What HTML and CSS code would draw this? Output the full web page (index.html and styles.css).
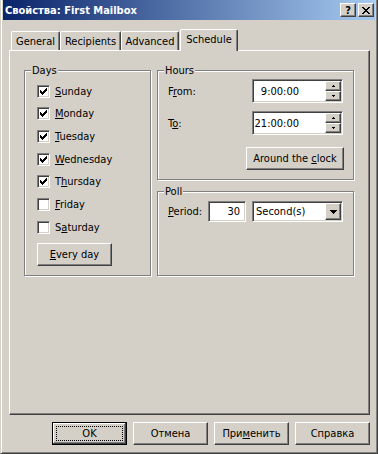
FILE: index.html
```html
<!DOCTYPE html>
<html lang="ru">
<head>
  <meta charset="UTF-8" />
  <title>Свойства: First Mailbox</title>
  <link rel="stylesheet" href="styles.css">
</head>
<body>
  <div class="window">
    <div class="titlebar">
      <span class="title">Свойства: First Mailbox</span>
      <div class="caption-buttons">
        <span class="caption-btn help">?</span>
        <span class="caption-btn">
          <svg width="8" height="7" viewBox="0 0 8 7" shape-rendering="crispEdges"><path d="M0 0h2v1H0zM6 0h2v1H6zM1 1h2v1H1zM5 1h2v1H5zM2 2h4v1H2zM3 3h2v1H3zM2 4h4v1H2zM1 5h2v1H1zM5 5h2v1H5zM0 6h2v1H0zM6 6h2v1H6z" fill="#000"/></svg>
        </span>
      </div>
    </div>

    <div class="tabs">
      <div class="tab tab-general">General</div>
      <div class="tab tab-recipients">Recipients</div>
      <div class="tab tab-advanced">Advanced</div>
      <div class="tab tab-schedule selected">Schedule</div>
    </div>

    <div class="panel">
      <div class="columns">
        <fieldset class="group days">
          <legend>Days</legend>
          <div class="group-body">
            <label class="check-row"><span class="check"><svg width="9" height="9" viewBox="0 0 9 9" shape-rendering="crispEdges"><path d="M7 1h1v1H7zM6 2h2v1H6zM1 3h1v1H1zM5 3h3v1H5zM1 4h2v1H1zM4 4h3v1H4zM1 5h5v1H1zM2 6h3v1H2zM3 7h1v1H3z" fill="#000"/></svg></span><span><u>S</u>unday</span></label>
            <label class="check-row"><span class="check"><svg width="9" height="9" viewBox="0 0 9 9" shape-rendering="crispEdges"><path d="M7 1h1v1H7zM6 2h2v1H6zM1 3h1v1H1zM5 3h3v1H5zM1 4h2v1H1zM4 4h3v1H4zM1 5h5v1H1zM2 6h3v1H2zM3 7h1v1H3z" fill="#000"/></svg></span><span><u>M</u>onday</span></label>
            <label class="check-row"><span class="check"><svg width="9" height="9" viewBox="0 0 9 9" shape-rendering="crispEdges"><path d="M7 1h1v1H7zM6 2h2v1H6zM1 3h1v1H1zM5 3h3v1H5zM1 4h2v1H1zM4 4h3v1H4zM1 5h5v1H1zM2 6h3v1H2zM3 7h1v1H3z" fill="#000"/></svg></span><span><u>T</u>uesday</span></label>
            <label class="check-row"><span class="check"><svg width="9" height="9" viewBox="0 0 9 9" shape-rendering="crispEdges"><path d="M7 1h1v1H7zM6 2h2v1H6zM1 3h1v1H1zM5 3h3v1H5zM1 4h2v1H1zM4 4h3v1H4zM1 5h5v1H1zM2 6h3v1H2zM3 7h1v1H3z" fill="#000"/></svg></span><span><u>W</u>ednesday</span></label>
            <label class="check-row"><span class="check"><svg width="9" height="9" viewBox="0 0 9 9" shape-rendering="crispEdges"><path d="M7 1h1v1H7zM6 2h2v1H6zM1 3h1v1H1zM5 3h3v1H5zM1 4h2v1H1zM4 4h3v1H4zM1 5h5v1H1zM2 6h3v1H2zM3 7h1v1H3z" fill="#000"/></svg></span><span>T<u>h</u>ursday</span></label>
            <label class="check-row"><span class="check"></span><span><u>F</u>riday</span></label>
            <label class="check-row"><span class="check"></span><span>S<u>a</u>turday</span></label>
            <span class="btn every-day"><span><u>E</u>very day</span></span>
          </div>
        </fieldset>

        <div class="right-col">
          <fieldset class="group hours">
            <legend>Hours</legend>
            <div class="group-body">
              <div class="field-row">
                <span>F<u>r</u>om:</span>
                <div class="field spin-field">
                  <span class="value">9:00:00</span>
                  <div class="spinner">
                    <span class="spin-btn"><svg width="3" height="2" viewBox="0 0 3 2" shape-rendering="crispEdges"><path d="M1 0h1v1H1zM0 1h3v1H0z" fill="#000"/></svg></span>
                    <span class="spin-btn"><svg width="3" height="2" viewBox="0 0 3 2" shape-rendering="crispEdges"><path d="M0 0h3v1H0zM1 1h1v1H1z" fill="#000"/></svg></span>
                  </div>
                </div>
              </div>
              <div class="field-row to-row">
                <span>T<u>o</u>:</span>
                <div class="field spin-field">
                  <span class="value">21:00:00</span>
                  <div class="spinner">
                    <span class="spin-btn"><svg width="3" height="2" viewBox="0 0 3 2" shape-rendering="crispEdges"><path d="M1 0h1v1H1zM0 1h3v1H0z" fill="#000"/></svg></span>
                    <span class="spin-btn"><svg width="3" height="2" viewBox="0 0 3 2" shape-rendering="crispEdges"><path d="M0 0h3v1H0zM1 1h1v1H1z" fill="#000"/></svg></span>
                  </div>
                </div>
              </div>
              <div class="clock-row">
                <span class="btn clock"><span>Around the <u>c</u>lock</span></span>
              </div>
            </div>
          </fieldset>

          <fieldset class="group poll">
            <legend>Poll</legend>
            <div class="group-body">
              <div class="poll-row">
                <span class="period-label"><u>P</u>eriod:</span>
                <div class="field period-input">30</div>
                <div class="field combo">
                  <span class="combo-value">Second(s)</span>
                  <span class="combo-btn"><svg width="7" height="4" viewBox="0 0 7 4" shape-rendering="crispEdges"><path d="M0 0h7v1H0zM1 1h5v1H1zM2 2h3v1H2zM3 3h1v1H3z" fill="#000"/></svg></span>
                </div>
              </div>
            </div>
          </fieldset>
        </div>
      </div>
    </div>

    <div class="actions">
      <span class="btn action default"><span class="focus">OK</span></span>
      <span class="btn action"><span>Отмена</span></span>
      <span class="btn action"><span>При<u>м</u>енить</span></span>
      <span class="btn action"><span>Справка</span></span>
    </div>
  </div>
</body>
</html>
```

FILE: styles.css
```css
* {
  box-sizing: border-box;
}

body {
  margin: 0;
  font-family: "DejaVu Sans Condensed", "Liberation Sans", sans-serif;
  font-size: 11px;
  line-height: 13px;
  color: #000;
  background: #d4d0c8;
}

.window {
  width: 378px;
  height: 454px;
  background: #d4d0c8;
  border-left: 1px solid #d4d0c8;
  border-right: 1px solid #404040;
  border-bottom: 1px solid #404040;
  box-shadow: inset 1px 0 #fff, inset -1px -1px #808080;
  padding: 0 2px 2px 2px;
}

/* title bar */
.titlebar {
  height: 20px;
  display: flex;
  align-items: center;
  justify-content: space-between;
  padding: 0 1px 0 2px;
  background: linear-gradient(to right, #0a246a, #a6caf0);
}

.title {
  color: #fff;
  font-weight: bold;
}

.caption-buttons {
  display: flex;
  gap: 2px;
}

.caption-btn {
  width: 16px;
  height: 14px;
  display: flex;
  align-items: center;
  justify-content: center;
  background: #d4d0c8;
  border: 1px solid;
  border-color: #fff #404040 #404040 #fff;
  box-shadow: inset -1px -1px #808080;
}

.caption-btn.help {
  font-weight: bold;
  font-size: 11px;
}

/* tabs */
.tabs {
  display: flex;
  align-items: flex-end;
  height: 21px;
  margin: 9px 0 0 6px;
  padding-left: 2px;
  position: relative;
  z-index: 1;
}

.tab {
  height: 19px;
  display: flex;
  align-items: center;
  justify-content: center;
  background: #d4d0c8;
  border: 1px solid;
  border-color: #fff #404040 transparent #fff;
  border-bottom: none;
  border-radius: 2px 2px 0 0;
  box-shadow: inset -1px 0 #808080;
}

.tab-general { width: 49px; }
.tab-recipients { width: 61px; }
.tab-advanced { width: 58px; }

.tab.selected {
  width: 58px;
  height: 22px;
  margin-left: 1px;
  margin-bottom: -1px;
  padding-bottom: 2px;
}

/* panel */
.panel {
  width: 361px;
  height: 365px;
  margin-left: 6px;
  border: 1px solid;
  border-color: #fff #404040 #404040 #fff;
  box-shadow: inset -1px -1px #808080;
  padding: 13px 0 0 14px;
}

.columns {
  display: flex;
  gap: 6px;
}

.group {
  margin: 0;
  padding: 0;
  min-width: 0;
  border: 1px solid #808080;
  box-shadow: 1px 1px 0 #fff, inset 1px 1px 0 #fff;
}

.group legend {
  margin-left: 6px;
  padding: 0 1px;
  background: #d4d0c8;
  line-height: 13px;
}

.days {
  width: 127px;
  height: 212px;
}

.days .group-body {
  padding: 3px 0 0 12px;
}

.check-row {
  display: flex;
  align-items: center;
  gap: 5px;
  height: 22.67px;
}

.check {
  width: 13px;
  height: 13px;
  padding: 1px;
  background: #fff;
  border: 1px solid;
  border-color: #808080 #fff #fff #808080;
  box-shadow: inset 1px 1px #404040, inset -1px -1px #d4d0c8;
}

.check svg {
  display: block;
}

.btn {
  display: flex;
  align-items: center;
  justify-content: center;
  height: 23px;
  background: #d4d0c8;
  border: 1px solid;
  border-color: #fff #404040 #404040 #fff;
  box-shadow: inset -1px -1px #808080;
}

.every-day {
  width: 75px;
  margin-top: 4px;
}

.right-col {
  display: flex;
  flex-direction: column;
  gap: 5px;
}

.hours {
  width: 197px;
  height: 116px;
}

.hours .group-body {
  padding: 2px 10px 0 10px;
}

.field-row {
  display: flex;
  align-items: center;
  justify-content: space-between;
}

.to-row {
  margin-top: 8px;
}

.field {
  background: #fff;
  border: 1px solid;
  border-color: #808080 #fff #fff #808080;
  box-shadow: inset 1px 1px #404040, inset -1px -1px #d4d0c8;
  padding: 1px;
}

.spin-field {
  width: 91px;
  height: 24px;
  display: flex;
}

.spin-field .value {
  flex: 1;
  text-align: right;
  padding-right: 26px;
  align-self: center;
}

.spinner {
  width: 16px;
  display: flex;
  flex-direction: column;
}

.spin-btn {
  flex: 1;
  display: flex;
  align-items: center;
  justify-content: center;
  background: #d4d0c8;
  border: 1px solid;
  border-color: #fff #404040 #404040 #fff;
  box-shadow: inset -1px -1px #808080;
}

.clock-row {
  display: flex;
  justify-content: flex-end;
  margin: 12px -1px 0 0;
}

.clock {
  width: 98px;
}

.poll {
  width: 197px;
  height: 91px;
}

.poll .group-body {
  padding: 3px 10px 0 10px;
}

.poll-row {
  display: flex;
  align-items: center;
  height: 21px;
}

.period-label {
  width: 40px;
}

.period-input {
  width: 38px;
  height: 21px;
  text-align: right;
  padding: 3px 5px 0 0;
}

.combo {
  width: 91px;
  height: 21px;
  margin-left: 6px;
  display: flex;
  align-items: stretch;
}

.combo-value {
  flex: 1;
  align-self: center;
  padding-left: 2px;
}

.combo-btn {
  width: 16px;
  display: flex;
  align-items: center;
  justify-content: center;
  background: #d4d0c8;
  border: 1px solid;
  border-color: #fff #404040 #404040 #fff;
  box-shadow: inset -1px -1px #808080;
}

/* dialog buttons */
.actions {
  display: flex;
  justify-content: flex-end;
  gap: 6px;
  margin-top: 7px;
  padding-right: 5px;
}

.action {
  width: 75px;
}

.default {
  border: 1px solid #000;
  box-shadow: inset -1px -1px #404040, inset 1px 1px #fff, inset -2px -2px #808080;
  padding: 3px;
}

.focus {
  flex: 1;
  align-self: stretch;
  display: flex;
  align-items: center;
  justify-content: center;
  border: 1px dotted #000;
}
```
